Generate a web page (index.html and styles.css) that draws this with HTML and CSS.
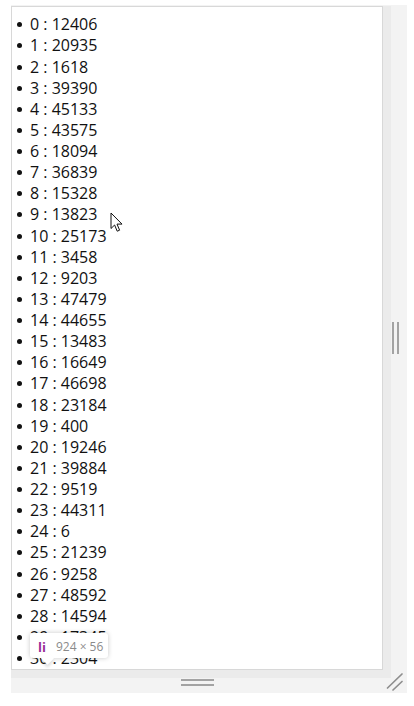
FILE: index.html
```html
<!DOCTYPE html>
<html>
<head>
<meta charset="utf-8">
<link rel="stylesheet" href="styles.css">
</head>
<body>
<div class="frame">
  <div class="panel">
    <ul class="list">
      <li>0 : 12406</li>
      <li>1 : 20935</li>
      <li>2 : 1618</li>
      <li>3 : 39390</li>
      <li>4 : 45133</li>
      <li>5 : 43575</li>
      <li>6 : 18094</li>
      <li>7 : 36839</li>
      <li>8 : 15328</li>
      <li>9 : 13823</li>
      <li>10 : 25173</li>
      <li>11 : 3458</li>
      <li>12 : 9203</li>
      <li>13 : 47479</li>
      <li>14 : 44655</li>
      <li>15 : 13483</li>
      <li>16 : 16649</li>
      <li>17 : 46698</li>
      <li>18 : 23184</li>
      <li>19 : 400</li>
      <li>20 : 19246</li>
      <li>21 : 39884</li>
      <li>22 : 9519</li>
      <li>23 : 44311</li>
      <li>24 : 6</li>
      <li>25 : 21239</li>
      <li>26 : 9258</li>
      <li>27 : 48592</li>
      <li>28 : 14594</li>
      <li>29 : 17345</li>
      <li>30 : 2304</li>
      <li>31 : 30417</li>
    </ul>
  </div>
  <div class="vgutter"><span class="vbar"></span><span class="vbar"></span></div>
  <div class="hgutter"><span class="hbar"></span><span class="hbar"></span></div>
  <div class="corner">
    <svg class="grip" width="24" height="23" viewBox="0 0 24 23">
      <line x1="4.5" y1="18" x2="19" y2="4" />
      <line x1="10" y1="20" x2="19" y2="11.5" />
    </svg>
  </div>
</div>
<div class="tooltip"><span class="tag">li</span><span class="dims">924 × 56</span></div>
<svg class="cursor" width="14" height="21" viewBox="0 0 14 21">
  <path d="M1 1 L1 16.5 L4.6 13 L7.2 19.2 L9.6 18.2 L7 12.1 L12 12.1 Z" />
</svg>
</body>
</html>
```

FILE: styles.css
```css
html, body {
  margin: 0;
  padding: 0;
  background: #ffffff;
}

body {
  width: 414px;
  height: 706px;
  overflow: hidden;
  font-family: "Open Sans", "Noto Sans", sans-serif;
}

.frame {
  margin: 5px 0 0 11px;
  padding-top: 1px;
  width: 396px;
  display: grid;
  grid-template-columns: 372px 24px;
  grid-template-rows: 664px 23px;
  background: #f3f3f3;
}

.panel {
  box-sizing: border-box;
  background: #ffffff;
  border: 1px solid #d8d8d8;
  overflow: hidden;
  box-shadow: 4px 4px 0 4px #ebebeb;
}

.list {
  margin: 0;
  padding: 7.3px 0 0 5px;
  list-style: none;
  color: #111111;
  font-size: 16px;
  line-height: 21.12px;
}

.list li {
  display: flex;
  align-items: center;
  white-space: nowrap;
}

.list li::before {
  content: "";
  flex: none;
  width: 5px;
  height: 5px;
  border-radius: 50%;
  background: #111111;
  margin-right: 8px;
}

.vgutter {
  display: flex;
  justify-content: center;
  align-items: center;
  gap: 3px;
}

.vbar {
  width: 2px;
  height: 32px;
  background: #a3a3a3;
}

.hgutter {
  display: flex;
  flex-direction: column;
  justify-content: flex-start;
  align-items: center;
  gap: 3px;
  padding-top: 9px;
}

.hbar {
  width: 33px;
  height: 2px;
  background: #a3a3a3;
}

.corner {
  display: flex;
}

.grip line {
  stroke: #8e8e8e;
  stroke-width: 1.7;
  stroke-linecap: round;
}

.tooltip {
  position: absolute;
  left: 30px;
  top: 633px;
  width: 78px;
  height: 25px;
  box-sizing: border-box;
  background: #ffffff;
  border-radius: 3px;
  box-shadow: 0 0 5px rgba(0, 0, 0, 0.22);
  display: flex;
  align-items: center;
  padding: 2px 0 0 8px;
  gap: 10px;
  font-size: 12px;
}

.tooltip::after {
  content: "";
  position: absolute;
  left: 12.5px;
  top: 20.5px;
  width: 9px;
  height: 9px;
  background: #ffffff;
  transform: rotate(45deg);
  box-shadow: 2px 2px 3px rgba(0, 0, 0, 0.12);
}

.tag {
  color: #9b2d98;
  font-weight: 700;
  font-size: 13px;
}

.dims {
  color: #8a8a8a;
}

.cursor {
  position: absolute;
  left: 110px;
  top: 212px;
}

.cursor path {
  fill: #ffffff;
  stroke: #111111;
  stroke-width: 1;
  stroke-linejoin: miter;
}
```
